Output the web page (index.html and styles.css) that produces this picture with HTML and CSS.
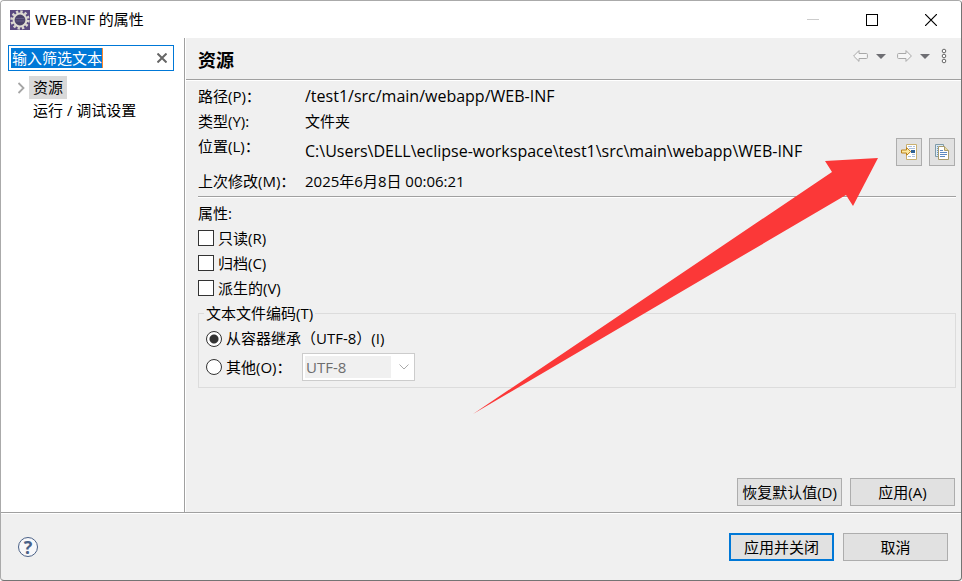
FILE: index.html
```html
<!DOCTYPE html>
<html lang="zh-CN">
<head>
  <meta charset="UTF-8">
  <title>WEB-INF 的属性</title>
  <meta name="viewport" content="width=device-width, initial-scale=1.0">
  <link rel="stylesheet" href="styles.css">
</head>
<body>
  <div class="dialog">
    <header class="titlebar">
      <svg class="app-icon" width="20" height="20" viewBox="0 0 20 20" aria-hidden="true">
        <rect width="20" height="20" fill="#5b4a80"/>
        <circle cx="10" cy="10" r="8.2" fill="none" stroke="#d9d5cf" stroke-width="3" stroke-dasharray="2.3 2"/>
        <circle cx="10" cy="10" r="6.4" fill="#4a4168" stroke="#dedad2" stroke-width="2"/>
        <path d="M5.6 8.5H14.4M5.4 11H14.6" stroke="#655c86"/>
      </svg>
      <span class="title">WEB-INF 的属性</span>
      <button class="win-btn" aria-label="最小化" disabled>
        <svg width="12" height="12"><path d="M0 5.5H12" stroke="#ccc"/></svg>
      </button>
      <button class="win-btn" aria-label="最大化">
        <svg width="12" height="12"><rect x=".5" y=".5" width="11" height="11" fill="none" stroke="#000"/></svg>
      </button>
      <button class="win-btn" aria-label="关闭">
        <svg width="12" height="12"><path d="M0 0L12 12M12 0L0 12" stroke="#000" stroke-width="1.2"/></svg>
      </button>
    </header>

    <div class="content">
      <nav class="sidebar">
        <div class="filter">
          <span class="filter-field"><input type="text" id="filter" value="输入筛选文本" aria-label="筛选"></span>
          <button class="clear" aria-label="清除">
            <svg width="10" height="10"><path d="M.5 .5L9.5 9.5M9.5 .5L.5 9.5" stroke="#666" stroke-width="2"/></svg>
          </button>
        </div>
        <ul class="tree">
          <li>
            <svg width="8" height="12" viewBox="0 0 8 12"><path d="M1.5 1L6.5 6L1.5 11" fill="none" stroke="#a6a6a6" stroke-width="1.8"/></svg>
            <a href="#" class="selected">资源</a>
          </li>
          <li><a href="#">运行 / 调试设置</a></li>
        </ul>
      </nav>

      <main class="page">
        <div class="page-head">
          <h1>资源</h1>
          <div class="nav-tools">
            <div class="nav-group">
              <button aria-label="后退"><svg width="15" height="12" viewBox="0 0 15 12"><path d="M.6 6L6 .6V3.5H13.5Q14.4 3.5 14.4 4.5V7.5Q14.4 8.5 13.5 8.5H6V11.4Z" fill="#f6f6f6" stroke="#a8a8a8"/></svg></button>
              <button aria-label="后退历史"><svg width="10" height="5"><path d="M0 0H10L5 5Z" fill="#6e6e73"/></svg></button>
            </div>
            <div class="nav-group">
              <button aria-label="前进"><svg width="15" height="12" viewBox="0 0 15 12"><path d="M14.4 6L9 .6V3.5H1.5Q.6 3.5 .6 4.5V7.5Q.6 8.5 1.5 8.5H9V11.4Z" fill="#f6f6f6" stroke="#a8a8a8"/></svg></button>
              <button aria-label="前进历史"><svg width="10" height="5"><path d="M0 0H10L5 5Z" fill="#6e6e73"/></svg></button>
            </div>
            <button aria-label="菜单"><svg width="6" height="16" fill="#fff" stroke="#666"><circle cx="3" cy="3" r="1.8"/><circle cx="3" cy="8" r="1.8"/><circle cx="3" cy="13" r="1.8"/></svg></button>
          </div>
        </div>

        <div class="page-body">
          <dl class="info">
            <dt>路径(P)：</dt><dd class="path">/test1/src/main/webapp/WEB-INF</dd>
            <dt>类型(Y):</dt><dd>文件夹</dd>
            <dt>位置(L)：</dt>
            <dd class="location">
              <span class="path">C:\Users\DELL\eclipse-workspace\test1\src\main\webapp\WEB-INF</span>
              <button class="icon-btn" aria-label="在系统资源管理器中显示">
                <svg width="16" height="16" viewBox="0 0 16 16">
                  <path d="M5.5 .5H15.5V15.5H5.5Z" fill="#fff"/>
                  <path d="M5.5 4V.5H15.5V15.5H5.5V12" fill="none" stroke="#c8b070"/>
                  <path d="M7 2.5H11M12 2.5H14M8 4.5H14M11 10.5H14M7 12.5H10M11 12.5H14" stroke="#a9bfdc"/>
                  <rect x="10" y="6" width="4" height="3" fill="#2f6296"/>
                  <path d="M.5 6H5.5V3.5L9.7 7.5L5.5 11.5V9H.5Z" fill="#fde9a0" stroke="#b9811b"/>
                </svg>
              </button>
              <button class="icon-btn" aria-label="复制完整路径">
                <svg width="16" height="16" viewBox="0 0 16 16">
                  <path d="M1.5 .5H9.5V12.5H1.5Z" fill="#dcebf2" stroke="#7f9aa8"/>
                  <path d="M3 2.5H4M3 4.5H4M3 6.5H4M3 8.5H4M3 10.5H4" stroke="#6d95c8"/>
                  <path d="M4.5 2.5H10.5L14.5 6.5V15.5H4.5Z" fill="#fff" stroke="#a89b6c"/>
                  <path d="M10.5 2.5V6.5H14.5" fill="#e8d9a2" stroke="#a89b6c"/>
                  <path d="M6 6.5H9M6 8.5H13M6 10.5H13M6 12.5H11" stroke="#5d88c0"/>
                </svg>
              </button>
            </dd>
            <dt>上次修改(M)：</dt><dd>2025年6月8日 00:06:21</dd>
          </dl>

          <div class="attributes">
            <p>属性:</p>
            <label><input type="checkbox">只读(R)</label>
            <label><input type="checkbox">归档(C)</label>
            <label><input type="checkbox">派生的(V)</label>
          </div>

          <fieldset class="encoding">
            <legend>文本文件编码(T)</legend>
            <label><input type="radio" name="encoding" checked>从容器继承（UTF-8）(I)</label>
            <div class="other">
              <label><input type="radio" name="encoding">其他(O)：</label>
              <span class="combo">
                <select aria-label="编码" disabled><option>UTF-8</option></select>
                <svg width="10" height="6"><path d="M.5 .5L5 5L9.5 .5" fill="none" stroke="#aaa"/></svg>
              </span>
            </div>
          </fieldset>

          <div class="page-actions">
            <button class="btn">恢复默认值(D)</button>
            <button class="btn">应用(A)</button>
          </div>

          <svg class="pointer" width="406" height="257" viewBox="0 0 406 257" aria-hidden="true">
            <path d="M0 256L359 14L352 3L405 0L380 48L373 37Z" fill="#fb3838"/>
          </svg>
        </div>
      </main>
    </div>

    <footer class="footer">
      <button class="help" aria-label="帮助">?</button>
      <button class="btn primary">应用并关闭</button>
      <button class="btn">取消</button>
    </footer>
  </div>
</body>
</html>
```
FILE: styles.css
```css
* { box-sizing: border-box; }
body { margin: 0; font: 15px/25px "Open Sans", "Noto Sans CJK SC", sans-serif; color: #000; background: #fff; }
button, input, select { font: inherit; color: inherit; }
button { padding: 0; border: none; background: none; }
svg { display: block; }
a { color: inherit; text-decoration: none; }

.dialog { display: flex; flex-direction: column; min-height: 100vh; background: #f0f0f0; border: 1px solid #747474; border-top-color: #aaa; border-left-color: #aaa; border-radius: 4px; overflow: hidden; }

.titlebar { display: flex; align-items: center; height: 37px; padding: 0 1px 0 9px; background: #fff; }
.title { flex: 1; margin-left: 5px; }
.win-btn { width: 59px; height: 37px; display: flex; align-items: center; justify-content: center; }

.content { flex: 1; display: flex; border-bottom: 1px solid #a0a0a0; }

.sidebar { width: 184px; padding: 7px 10px 0 7px; background: #fff; border-right: 1px solid #a0a0a0; }
.filter { display: flex; align-items: center; height: 26px; padding: 0 6px 0 2px; border: 1px solid #0078d7; }
.filter-field { flex: 1; display: flex; }
.filter input { width: 92px; height: 20px; padding: 0 0 0 1px; border: none; border-right: 1px solid #ff8728; outline: none; background: #0078d7; color: #fff; }
.tree { margin: 5px 0 0; padding: 0 0 0 9px; list-style: none; }
.tree li { display: flex; align-items: center; height: 23px; padding-left: 12px; }
.tree li svg { margin-left: -12px; margin-right: 4px; }
.tree a { line-height: 23px; padding: 0 4px; white-space: nowrap; }
.tree .selected { background: #d9d9d9; }

.page { flex: 1; display: flex; flex-direction: column; border-left: 1px solid #fff; }
.page-head { display: flex; align-items: center; justify-content: space-between; height: 42px; padding: 3px 14px 0 12px; border-bottom: 1px solid #a0a0a0; box-shadow: 0 1px #fff; }
h1 { margin: 0; font-size: 18px; font-weight: bold; }
.nav-tools { display: flex; align-items: center; gap: 11px; padding-bottom: 8px; }
.nav-group { display: flex; align-items: center; gap: 8px; }

.page-body { flex: 1; display: flex; flex-direction: column; position: relative; padding: 4px 5px 6px 12px; }
.info { display: grid; grid-template-columns: 107px 1fr; margin: 0; padding-bottom: 2px; border-bottom: 1px solid #a0a0a0; box-shadow: 0 1px #fff; }
.info dd { margin: 0; }
.path { font-size: 16px; }
.location { display: flex; align-items: center; height: 35px; padding-right: 1px; }
.location span { flex: 1; }
.icon-btn { display: flex; align-items: center; justify-content: center; width: 26px; height: 28px; margin-left: 7px; border: 1px solid #adadad; background: #e1e1e1; }

.attributes { padding-top: 4px; }
.attributes p { margin: 0; }
.page-body label { display: flex; align-items: center; }
input[type="checkbox"] { appearance: none; width: 16px; height: 16px; margin: 0 4px 2px 0; border: 1px solid #333; background: #fff; }
input[type="radio"] { appearance: none; width: 16px; height: 16px; margin: 0 4px 0 0; border: 1px solid #333; border-radius: 50%; background: #fff; }
input[type="radio"]:checked { background: radial-gradient(circle, #333 4px, #fff 5px); }

.encoding { margin: 0; padding: 0 7px 4px; border: 1px solid #dcdcdc; }
.encoding legend { padding: 0 2px; margin-left: -2px; }
.other { display: flex; align-items: center; height: 32px; }
.other label { width: 96px; white-space: nowrap; }
.combo { display: flex; align-items: center; justify-content: space-between; width: 113px; height: 28px; padding: 2px 5px 2px 2px; border: 1px solid #ccc; background: #fff; }
.combo select { appearance: none; width: 86px; height: 22px; padding: 0 0 0 1px; border: none; background: #f0f0f0; color: #6d6d6d; opacity: 1; line-height: 22px; }

.page-actions { display: flex; justify-content: flex-end; gap: 8px; margin-top: auto; padding-right: 1px; }
.btn { width: 105px; height: 28px; border: 1px solid #adadad; background: #e1e1e1; white-space: nowrap; }
.primary { border: 2px solid #0078d7; }

/* arrow drawn over the form, aimed at the location buttons */
.pointer { position: absolute; top: 78px; right: 82px; pointer-events: none; }

.footer { display: flex; align-items: center; gap: 9px; height: 67px; padding: 0 13px 0 17px; border-top: 1px solid #fff; }
.help { width: 20px; height: 20px; margin-right: auto; border: 1px solid #4a6187; border-radius: 50%; background: #f8f8fa; color: #4a6187; font-size: 18px; font-weight: bold; line-height: 18px; }
```
